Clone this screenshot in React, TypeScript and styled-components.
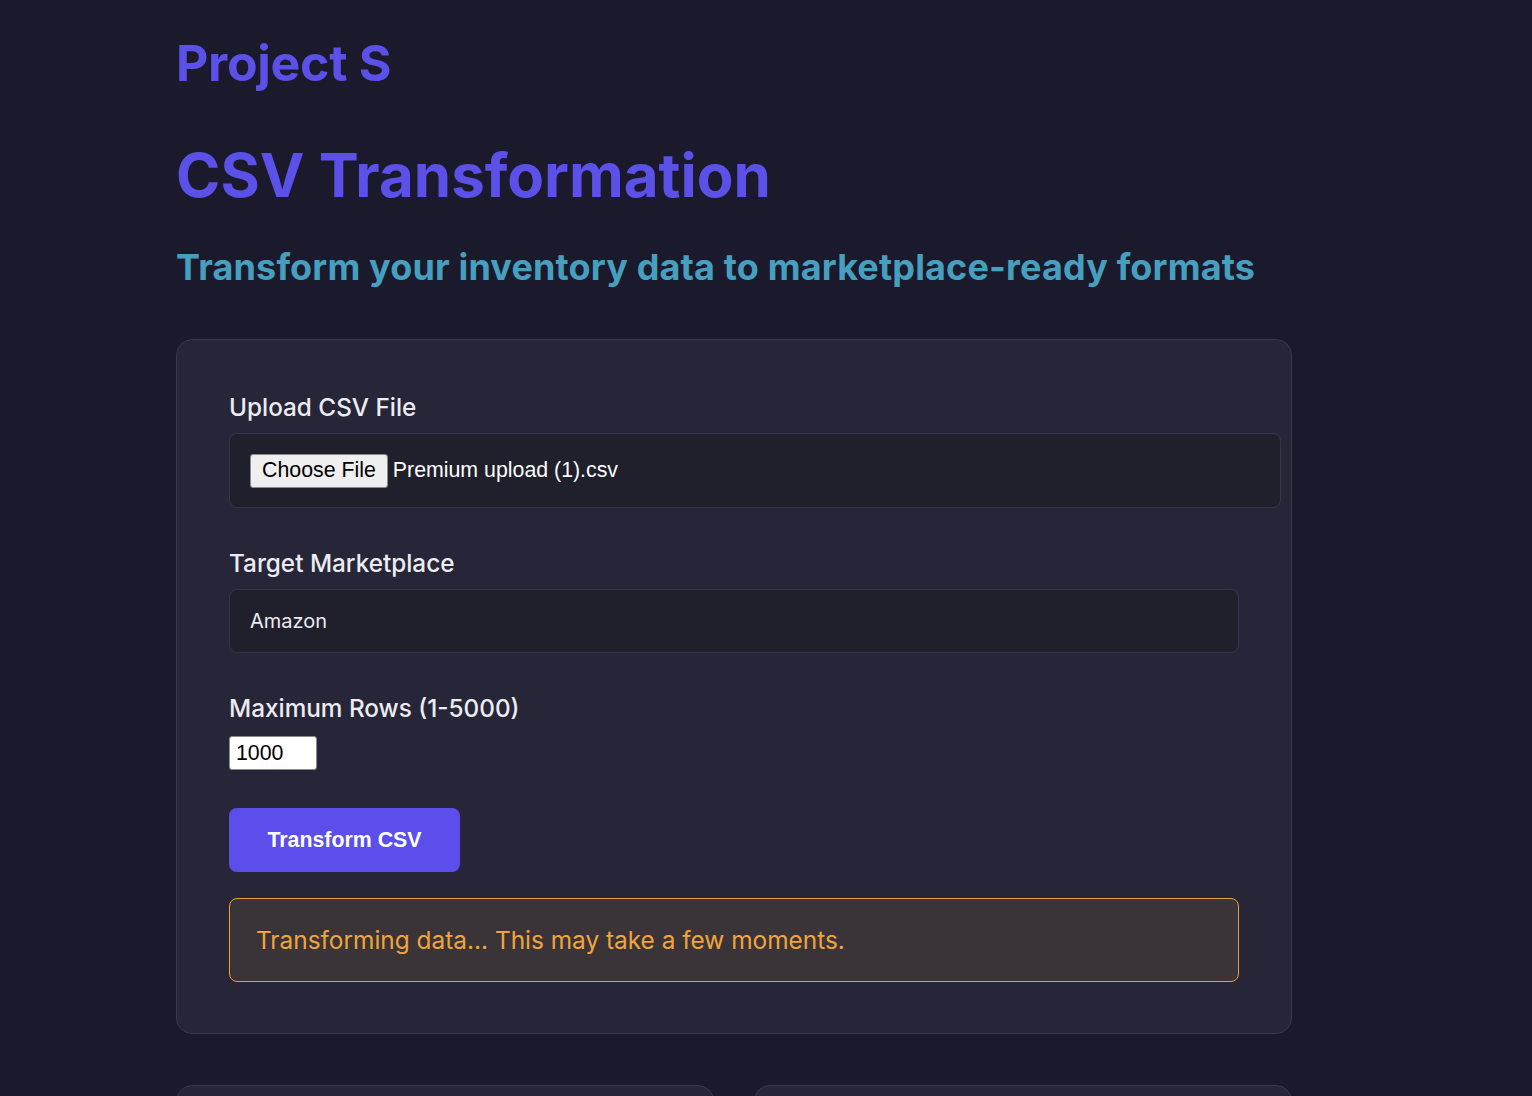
import React from 'react';
import styled, { createGlobalStyle } from 'styled-components';

const GlobalStyle = createGlobalStyle`
  html, body {
    margin: 0;
    padding: 0;
    background: #1b1a2c;
  }
  body {
    font-family: Inter, 'Noto Sans', sans-serif;
    color: #ececf1;
  }
`;

const App: React.FC = () => {
  return (
    <>
      <GlobalStyle />
      <Page>
        <Container>
          <Brand>Project S</Brand>
          <Title>CSV Transformation</Title>
          <Subtitle>Transform your inventory data to marketplace-ready formats</Subtitle>
          <Card>
            <Field>
              <Label>Upload CSV File</Label>
              <FileBox>
                <FileButton type="button">Choose File</FileButton>
                <FileName>Premium upload (1).csv</FileName>
              </FileBox>
            </Field>
            <Field>
              <Label>Target Marketplace</Label>
              <SelectBox>Amazon</SelectBox>
            </Field>
            <Field $gap={11}>
              <Label>Maximum Rows (1-5000)</Label>
              <NumberInput type="number" defaultValue={1000} />
            </Field>
            <SubmitButton type="button">Transform CSV</SubmitButton>
            <Notice>Transforming data... This may take a few moments.</Notice>
          </Card>
          <CardRow>
            <SmallCard />
            <SmallCard />
          </CardRow>
        </Container>
      </Page>
    </>
  );
};

const Page = styled.div`
  height: 1096px;
  overflow: hidden;
  padding-left: 176px;
  box-sizing: border-box;
`;

const Container = styled.div`
  width: 1116px;
  padding-top: 36px;
`;

const Brand = styled.h1`
  margin: 0;
  font-size: 50px;
  line-height: 54px;
  font-weight: 700;
  letter-spacing: -0.3px;
  color: #5b50e8;
`;

const Title = styled.h2`
  margin: 49px 0 0;
  font-size: 60px;
  line-height: 72px;
  font-weight: 700;
  color: #5b50e8;
`;

const Subtitle = styled.h3`
  margin: 34px 0 0;
  font-size: 36px;
  line-height: 44px;
  font-weight: 700;
  letter-spacing: 0.15px;
  color: #479fbf;
`;

const Card = styled.div`
  margin-top: 50px;
  box-sizing: border-box;
  padding: 50px 52px 51px;
  background: #272638;
  border: 1px solid #38374c;
  border-radius: 16px;
  display: flex;
  flex-direction: column;
  align-items: flex-start;
`;

const Field = styled.div<{ $gap?: number }>`
  width: 100%;
  display: flex;
  flex-direction: column;
  align-items: flex-start;
  gap: ${(p) => p.$gap ?? 9}px;
  margin-bottom: 38px;
`;

const Label = styled.label`
  font-size: 24.3px;
  line-height: 34px;
  font-weight: 500;
  color: #ececf1;
`;

const FileBox = styled.div`
  width: 100%;
  box-sizing: content-box;
  height: 73px;
  padding: 0 20px;
  background: #201f2c;
  border: 1px solid #35344a;
  border-radius: 8px;
  display: flex;
  align-items: center;
  gap: 5px;
  margin-right: -40px;
`;

const FileButton = styled.button`
  font-family: 'Liberation Sans', Arial, sans-serif;
  font-size: 21.33px;
  height: 34px;
  padding: 0 11px;
  background: #efefef;
  color: #000;
  border: 1px solid #8a8a8a;
  border-radius: 3px;
`;

const FileName = styled.span`
  font-family: 'Liberation Sans', Arial, sans-serif;
  font-size: 21.33px;
  color: #ffffff;
`;

const SelectBox = styled.div`
  width: 100%;
  box-sizing: border-box;
  height: 64px;
  padding: 0 20px;
  background: #201f2c;
  border: 1px solid #35344a;
  border-radius: 8px;
  display: flex;
  align-items: center;
  font-size: 20px;
  color: #ececf1;
`;

const NumberInput = styled.input`
  width: 88px;
  height: 34px;
  box-sizing: border-box;
  padding: 0 6px;
  font-family: 'Liberation Sans', Arial, sans-serif;
  font-size: 21.33px;
  color: #000;
  background: #fff;
  border: 1px solid #8a8a8a;
  border-radius: 3px;
  &::-webkit-inner-spin-button {
    -webkit-appearance: none;
  }
`;

const SubmitButton = styled.button`
  width: 231px;
  height: 64px;
  background: #5b4eea;
  color: #fff;
  border: none;
  border-radius: 8px;
  font-family: 'Liberation Sans', Arial, sans-serif;
  font-size: 21.33px;
  font-weight: 700;
  cursor: pointer;
`;

const Notice = styled.div`
  margin-top: 26px;
  width: 100%;
  box-sizing: border-box;
  height: 84px;
  padding: 0 26px;
  display: flex;
  align-items: center;
  background: #3a3439;
  border: 1px solid #e8a034;
  border-radius: 8px;
  font-size: 24.4px;
  color: #f0a53b;
`;

const CardRow = styled.div`
  margin-top: 51px;
  display: grid;
  grid-template-columns: 1fr 1fr;
  gap: 40px;
`;

const SmallCard = styled.div`
  height: 120px;
  background: #272638;
  border: 1px solid #38374c;
  border-radius: 16px;
`;

export default App;
